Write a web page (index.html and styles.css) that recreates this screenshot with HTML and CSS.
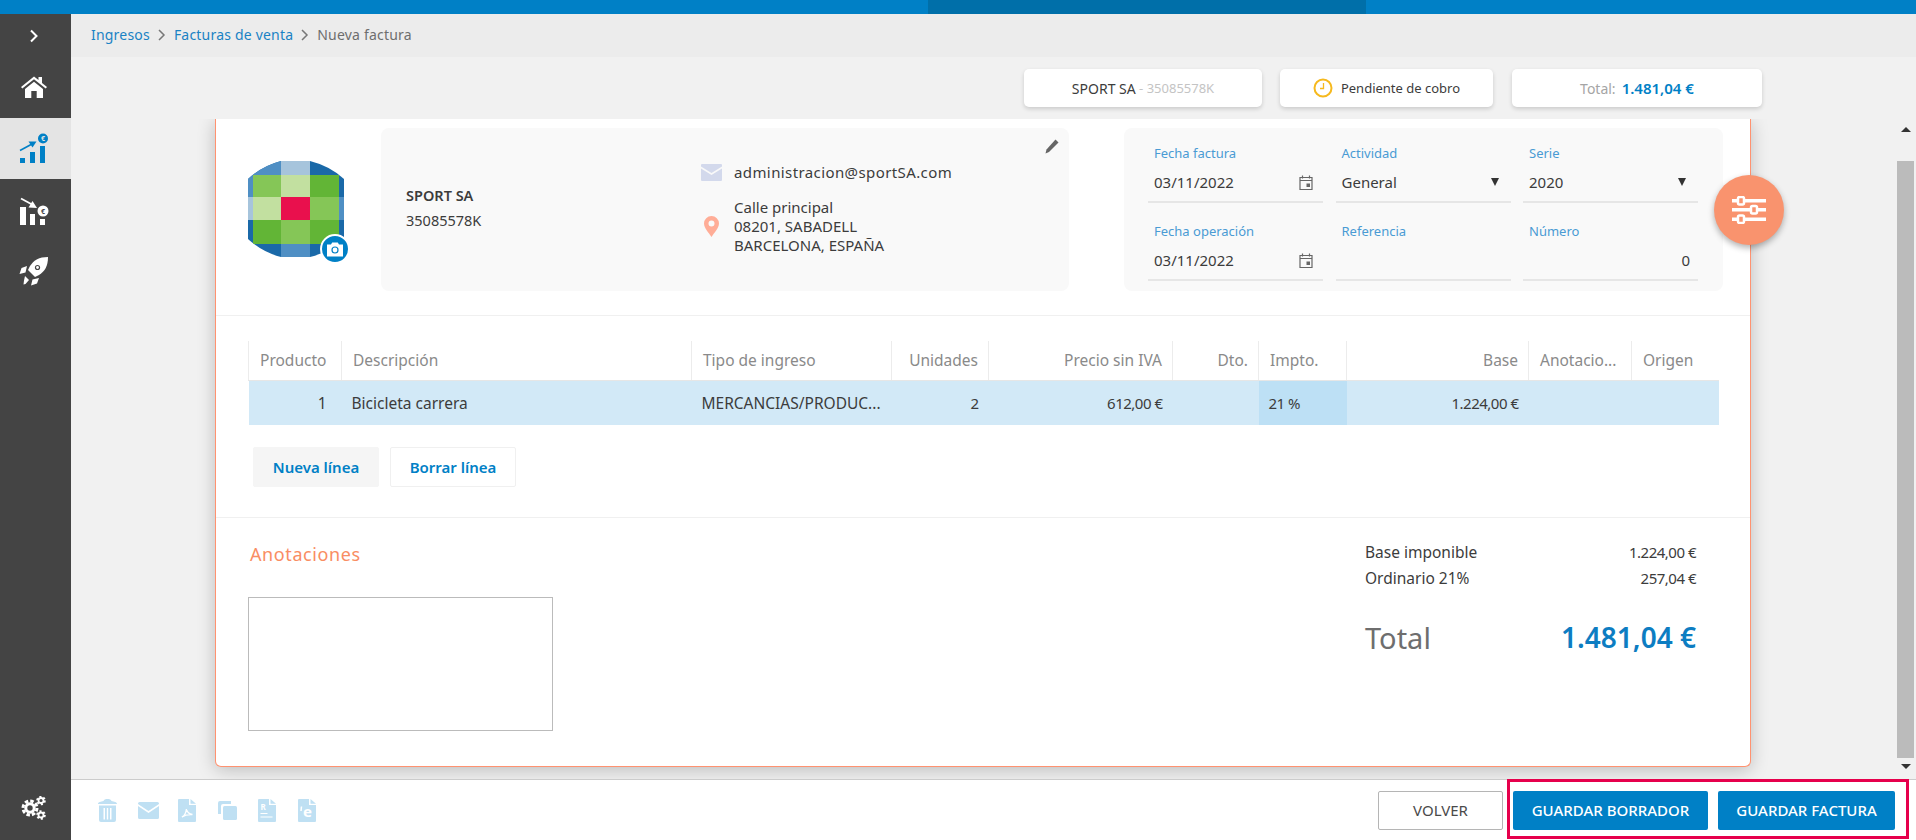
FILE: index.html
```html
<!doctype html>
<html lang="es">
<head>
<meta charset="UTF-8">
<title>Nueva factura</title>
<link rel="stylesheet" href="styles.css">
</head>
<body>
	<!-- barra superior -->
	<div class="topbar"><div class="topbar_dark"></div></div>

	<div class="app">
		<!-- menu lateral -->
		<nav class="sidebar">
			<div class="side_toggle">
				<svg width="10" height="14" viewBox="0 0 10 14"><path d="M2 1.5 7.5 7 2 12.5" fill="none" stroke="#fff" stroke-width="2"/></svg>
			</div>
			<div class="side_item">
				<svg width="28" height="24" viewBox="0 1 28 24"><path d="M1 12 14 1.5l4.5 3.6V2h3.5v5.9L27 12l-1.3 1.6L14 4.3 2.3 13.6z" fill="#fff"/><path d="M5 14 14 6.8 23 14v9h-6.300v-7h-5.400v7H5z" fill="#fff"/></svg>
			</div>
			<div class="side_item side_active">
				<svg width="30" height="32" viewBox="0 0 30 32"><rect x="1" y="25" width="5" height="5" fill="#0080c6"/><rect x="11" y="19" width="5" height="11" fill="#0080c6"/><rect x="21" y="13" width="5" height="17" fill="#0080c6"/><path d="M1 17.500 13 11" stroke="#0080c6" stroke-width="1.600" fill="none"/><path d="M17.500 8.500 9.500 8.500 13.500 14.500z" fill="#0080c6"/><circle cx="24" cy="5.500" r="5" fill="#0080c6"/><text x="24" y="8" class="icon_euro" fill="#e4e4e4">€</text></svg>
			</div>
			<div class="side_item">
				<svg width="30" height="32" viewBox="0 -1 30 32"><rect x="1" y="12" width="6" height="18" fill="#fff"/><rect x="11" y="19" width="5" height="11" fill="#fff"/><rect x="21" y="24" width="5" height="6" fill="#fff"/><path d="M2 3.500 14 10" stroke="#fff" stroke-width="1.800" fill="none"/><path d="M18 13 9.500 12.500 13.500 6z" fill="#fff"/><circle cx="24" cy="16" r="5.500" fill="#fff"/><text x="24" y="19" class="icon_euro" fill="#444">€</text></svg>
			</div>
			<div class="side_item">
				<svg width="30" height="30" viewBox="0 0 30 30"><path d="M29 1c-9 0-14 3-18 9l-2 4 7 7 4-2c6-4 9-9 9-18z" fill="#fff"/><circle cx="18.500" cy="11.500" r="2.600" fill="#444"/><circle cx="18.500" cy="11.500" r="1.400" fill="#fff"/><path d="M8 10 2.500 12 0.500 18l6-1.500zM20 22l-2 5.500-6 2 1.500-6zM6 20l4 4-3.500 4-2 .5.500-4z" fill="#fff"/></svg>
			</div>
			<div class="side_bottom">
				<svg width="26" height="24" viewBox="0 0 26 24"><g fill="none" stroke="#fff"><circle cx="9" cy="12" r="7" stroke-width="3" stroke-dasharray="3.500 2"/><circle cx="9" cy="12" r="4.200" stroke-width="3"/><circle cx="20" cy="4.500" r="3.800" stroke-width="2" stroke-dasharray="2 1.980"/><circle cx="20" cy="4.500" r="2.500" stroke-width="1.800"/><circle cx="20" cy="19" r="3.800" stroke-width="2" stroke-dasharray="2 1.980"/><circle cx="20" cy="19" r="2.500" stroke-width="1.800"/></g></svg>
			</div>
		</nav>

		<main class="content">
			<div class="breadcrumb">
				<a class="crumb_link">Ingresos</a>
				<svg class="crumb_sep" width="8" height="12" viewBox="0 0 8 12"><path d="M1 1l5 5-5 5" fill="none" stroke="#777" stroke-width="1.500"/></svg>
				<a class="crumb_link">Facturas de venta</a>
				<svg class="crumb_sep" width="8" height="12" viewBox="0 0 8 12"><path d="M1 1l5 5-5 5" fill="none" stroke="#777" stroke-width="1.500"/></svg>
				<span class="crumb_now">Nueva factura</span>
			</div>

			<div class="chips">
				<div class="chip chip_client">SPORT SA<span class="chip_id">&nbsp;- 35085578K</span></div>
				<div class="chip chip_state">
					<svg width="20" height="20" viewBox="0 0 20 20"><circle cx="10" cy="10" r="8.500" fill="none" stroke="#f6b91e" stroke-width="2"/><path d="M10.500 5v5.500H7" fill="none" stroke="#f6b91e" stroke-width="1.300"/></svg>
					Pendiente de cobro
				</div>
				<div class="chip chip_total"><span class="chip_grey">Total:</span><b>1.481,04 €</b></div>
			</div>

			<div class="scroller">
				<div class="scroll_area">
					<section class="card">
						<div class="card_head">
							<div class="avatar">
								<svg width="96" height="96" viewBox="0 0 96 96">
									<clipPath id="logo_clip"><path d="M0 18Q14 5 33 0H62Q82 5 96 18V78Q82 91 62 96H33Q14 91 0 78z"/></clipPath>
									<g clip-path="url(#logo_clip)">
										<rect width="96" height="96" fill="#1a69a8"/>
										<rect x="0" width="33" height="14" fill="#4f8fc4"/>
										<rect x="33" width="29" height="14" fill="#a6c4dc"/>
										<rect x="33" y="83" width="29" height="13" fill="#4f8fc4"/>
										<rect x="0" y="36" width="5" height="23" fill="#a6c4dc"/>
										<rect x="91" y="36" width="5" height="23" fill="#4f8fc4"/>
										<rect x="0" y="14" width="5" height="22" fill="#4f8fc4"/>
										<rect x="5" y="14" width="28" height="22" fill="#85c657"/>
										<rect x="33" y="14" width="29" height="22" fill="#c2e0a0"/>
										<rect x="62" y="14" width="29" height="22" fill="#62b536"/>
										<rect x="5" y="36" width="28" height="23" fill="#c2e0a0"/>
										<rect x="33" y="36" width="29" height="23" fill="#e9104d"/>
										<rect x="62" y="36" width="29" height="23" fill="#85c657"/>
										<rect x="5" y="59" width="28" height="24" fill="#62b536"/>
										<rect x="33" y="59" width="29" height="24" fill="#85c657"/>
										<rect x="62" y="59" width="29" height="24" fill="#62b536"/>
									</g>
								</svg>
								<div class="avatar_badge">
									<svg width="18" height="15" viewBox="0 0 18 15"><path d="M1 2.500h4l1.200-2h5.600l1.200 2h4v12H1z" fill="#fff"/><circle cx="9" cy="8" r="3.600" fill="#0080c6"/><circle cx="9" cy="8" r="2.400" fill="#fff"/></svg>
								</div>
							</div>
							<div class="client_box">
								<div class="client_name">
									<b>SPORT SA</b>
									<span>35085578K</span>
								</div>
								<div class="client_contact">
									<div class="contact_row contact_mail">
										<svg class="contact_icon" width="21" height="17" viewBox="0 0 21 17"><path d="M1 0h19a1 1 0 0 1 1 1v1.500L10.500 9 0 2.500V1a1 1 0 0 1 1-1z" fill="#d3d9ec"/><path d="M0 4.500 10.500 11 21 4.500V16a1 1 0 0 1-1 1H1a1 1 0 0 1-1-1z" fill="#d3d9ec"/></svg>
										<span>administracion@sportSA.com</span>
									</div>
									<div class="contact_row">
										<svg class="contact_icon" width="15" height="21" viewBox="0 0 15 21"><path fill-rule="evenodd" d="M7.500 0A7.500 7.500 0 0 1 15 7.500C15 12 10 17 7.500 21 5 17 0 12 0 7.500A7.500 7.500 0 0 1 7.500 0zm0 4.500a3 3 0 1 0 0 6 3 3 0 0 0 0-6z" fill="#ffad97"/></svg>
										<span>Calle principal<br>08201, SABADELL<br>BARCELONA, ESPAÑA</span>
									</div>
								</div>
								<svg class="client_edit" width="14" height="15" viewBox="0 0 14 15"><path d="M10.500 0.500 13.500 3.500 4 13 0.500 14.500 1.500 10.500z" fill="#666"/></svg>
							</div>
							<div class="invoice_box">
								<div class="field">
									<label>Fecha factura</label>
									<div class="field_val">03/11/2022
										<svg width="14" height="15" viewBox="0 0 14 15"><path d="M1 2.500h12v12H1zM1 5.500h12M3.500 .5v3M10.500 .5v3" fill="none" stroke="#666" stroke-width="1.200"/><rect x="7.500" y="8.500" width="3.500" height="3.500" fill="#666"/></svg>
									</div>
								</div>
								<div class="field">
									<label>Actividad</label>
									<div class="field_val">General<i class="caret"></i></div>
								</div>
								<div class="field">
									<label>Serie</label>
									<div class="field_val">2020<i class="caret"></i></div>
								</div>
								<div class="field">
									<label>Fecha operación</label>
									<div class="field_val">03/11/2022
										<svg width="14" height="15" viewBox="0 0 14 15"><path d="M1 2.500h12v12H1zM1 5.500h12M3.500 .5v3M10.500 .5v3" fill="none" stroke="#666" stroke-width="1.200"/><rect x="7.500" y="8.500" width="3.500" height="3.500" fill="#666"/></svg>
									</div>
								</div>
								<div class="field">
									<label>Referencia</label>
									<div class="field_val"></div>
								</div>
								<div class="field">
									<label>Número</label>
									<div class="field_val field_num">0</div>
								</div>
							</div>
						</div>

						<div class="card_lines">
							<table class="lines">
								<colgroup>
									<col class="c1"><col class="c2"><col class="c3"><col class="c4"><col class="c5">
									<col class="c6"><col class="c7"><col class="c8"><col class="c9"><col class="c10">
								</colgroup>
								<tr>
									<th class="num first">Producto</th>
									<th>Descripción</th>
									<th>Tipo de ingreso</th>
									<th class="num">Unidades</th>
									<th class="num">Precio sin IVA</th>
									<th class="num">Dto.</th>
									<th>Impto.</th>
									<th class="num">Base</th>
									<th>Anotacio...</th>
									<th>Origen</th>
								</tr>
								<tr>
									<td class="num first">1</td>
									<td>Bicicleta carrera</td>
									<td>MERCANCIAS/PRODUC...</td>
									<td class="num cell_amount">2</td>
									<td class="num cell_amount">612,00 €</td>
									<td class="num"></td>
									<td class="cell_on cell_amount">21 %</td>
									<td class="num cell_amount">1.224,00 €</td>
									<td></td>
									<td></td>
								</tr>
							</table>
							<div class="line_btns">
								<button class="btn_line btn_grey">Nueva línea</button>
								<button class="btn_line">Borrar línea</button>
							</div>
						</div>

						<div class="card_foot">
							<div class="notes">
								<h3>Anotaciones</h3>
								<div class="notes_box"></div>
							</div>
							<div class="totals">
								<div class="total_row"><span>Base imponible</span><span class="total_val">1.224,00 €</span></div>
								<div class="total_row"><span>Ordinario 21%</span><span class="total_val">257,04 €</span></div>
								<div class="total_big"><span>Total</span><b>1.481,04 €</b></div>
							</div>
						</div>

						<button class="fab">
							<svg width="34" height="28" viewBox="0 0 34 28"><g fill="#fff"><rect y="3" width="34" height="3.500"/><rect y="12" width="34" height="3.500"/><rect y="21.500" width="34" height="3.500"/></g><g fill="#f9936e" stroke="#fff" stroke-width="2.500"><rect x="6" y="1" width="6" height="7.500" rx="1.500"/><rect x="19" y="10" width="6" height="7.500" rx="1.500"/><rect x="6" y="19.500" width="6" height="7.500" rx="1.500"/></g></svg>
						</button>
					</section>
				</div>
				<div class="scrollbar">
					<i class="arrow_up"></i>
					<div class="thumb"></div>
					<i class="arrow_down"></i>
				</div>
			</div>

			<footer class="footer">
				<div class="foot_icons">
					<svg width="19" height="23" viewBox="0 0 19 23"><path fill-rule="evenodd" d="M1 6.500h17v14.500a2 2 0 0 1-2 2H3a2 2 0 0 1-2-2zM5.500 9v11.500H7V9zM8.800 9v11.500h1.400V9zM12 9v11.500h1.500V9z" fill="#bfe0f3"/><path d="M0 5c0-2 3-2.500 5.500-3C6 .5 7.500 0 9.500 0s3.500.5 4 2c2.500.5 5.500 1 5.500 3z" fill="#bfe0f3"/></svg>
					<svg width="21" height="17" viewBox="0 0 21 17"><path d="M1.500 0h18A1.500 1.500 0 0 1 21 1.500V2L10.500 9 0 2v-.5A1.500 1.500 0 0 1 1.500 0z" fill="#bfe0f3"/><path d="M0 4 10.500 11 21 4v11.500a1.500 1.500 0 0 1-1.500 1.500h-18A1.500 1.500 0 0 1 0 15.500z" fill="#bfe0f3"/></svg>
					<svg width="18" height="23" viewBox="0 0 18 23"><path d="M1 0h10v6h7v16a1 1 0 0 1-1 1H1a1 1 0 0 1-1-1V1a1 1 0 0 1 1-1zM12.500 0 18 4.800h-5.500z" fill="#bfe0f3"/><path d="M4 18c3-1.500 4-4.500 4.500-8 .5 3 2.500 5 6 5.500-4-.3-7.500.3-10.500 2.500z" fill="none" stroke="#fff" stroke-width="1.400"/></svg>
					<svg width="19" height="19" viewBox="0 0 19 19"><path d="M2 0h11v3H5a2 2 0 0 0-2 2v8H0V2a2 2 0 0 1 2-2z" fill="#bfe0f3"/><rect x="5" y="5" width="14" height="14" rx="1.500" fill="#bfe0f3"/></svg>
					<svg width="18" height="23" viewBox="0 0 18 23"><path d="M1 0h10v6h7v16a1 1 0 0 1-1 1H1a1 1 0 0 1-1-1V1a1 1 0 0 1 1-1zM12.500 0 18 4.800h-5.500z" fill="#bfe0f3"/><path d="M2.500 14.500h7M2.500 18h12" stroke="#fff" stroke-width="1.200"/><text x="2.500" y="10.500" class="icon_letter">R</text></svg>
					<svg width="18" height="23" viewBox="0 0 18 23"><path d="M1 0h10v6h7v16a1 1 0 0 1-1 1H1a1 1 0 0 1-1-1V1a1 1 0 0 1 1-1zM12.500 0 18 4.800h-5.500z" fill="#bfe0f3"/><path d="M3.500 7.500 3 12" stroke="#fff" stroke-width="1.500"/><text x="5" y="18" class="icon_e">e</text></svg>
				</div>
				<div class="foot_btns">
					<button class="btn btn_back">VOLVER</button>
					<button class="btn btn_main">GUARDAR BORRADOR</button>
					<button class="btn btn_main">GUARDAR FACTURA</button>
				</div>
				<div class="highlight"></div>
			</footer>
		</main>
	</div>
</body>
</html>
```

FILE: styles.css
```css
*{
	box-sizing:border-box;
}
html, body{
	height:100%;
}
body{
	margin:0;
	height:840px;
	overflow:hidden;
	display:flex; flex-direction:column;
	font-family:"Noto Sans", "Liberation Sans", sans-serif;
	font-size:14px;
	color:#3c3c3c;
	background-color:#f1f1f1;
}
button{
	font-family:inherit;
}

/* barra superior */
.topbar{
	height:14px; flex:none;
	background-color:#0080c6;
	padding-left:928px;
}
.topbar_dark{
	width:438px; height:14px;
	background-color:#006fa9;
}
.app{
	flex:1; display:flex; min-height:0;
}

/* menu lateral */
.sidebar{
	width:71px; flex:none;
	background-color:#444444;
	display:flex; flex-direction:column;
}
.side_toggle{
	height:43px;
	display:flex; align-items:center; justify-content:center;
	padding-right:4px;
}
.side_item{
	height:61px;
	display:flex; align-items:center; justify-content:center;
	padding-right:3px;
}
.side_active{
	background-color:#e4e4e4;
}
.side_bottom{
	margin-top:auto; height:61px;
	display:flex; align-items:center; justify-content:center;
	padding-right:3px; padding-bottom:3px;
}
.icon_euro{
	font-size:7px; font-weight:bold; text-anchor:middle;
}
.icon_letter{
	font-size:8px; font-weight:bold; fill:#fff;
}
.icon_e{
	font-size:15px; font-weight:bold; fill:#fff;
}

.content{
	flex:1; min-width:0;
	display:flex; flex-direction:column;
}
.breadcrumb{
	height:43px; flex:none;
	background-color:#ececec;
	display:flex; align-items:center; gap:8px;
	padding-left:20px; padding-bottom:2px;
	font-size:14px;
	letter-spacing:.2px;
}
.crumb_link{
	color:#1a82c4;
}
.crumb_now{
	color:#6e6e6e;
}

/* resumen */
.chips{
	height:62px; flex:none;
	display:flex; gap:18px;
	padding:12px 0 0 953px;
}
.chip{
	height:38px;
	background-color:#ffffff;
	border-radius:5px;
	box-shadow:0 2px 4px rgba(0,0,0,.16);
	display:flex; align-items:center; justify-content:center;
	font-size:13px;
}
.chip_client{
	width:238px; font-size:14px;
}
.chip_id{
	color:#c4c4c4; font-size:13px;
}
.chip_state{
	width:213px; gap:8px;
}
.chip_total{
	width:250px; gap:6px; font-size:14px;
	margin-left:1px;
}
.chip_grey{
	color:#a5a5a5;
}
.chip_total b{
	color:#0080c6; font-weight:600; font-size:15px;
}

/* zona con scroll */
.scroller{
	flex:1; min-height:0;
	display:flex;
}
.scroll_area{
	flex:1; min-width:0;
	padding-left:144px;
	overflow:hidden;
}
.scrollbar{
	width:19px; flex:none;
	display:flex; flex-direction:column; align-items:center;
	padding:0 2px 0 0;
	position:relative;
}
.thumb{
	width:17px; height:597px;
	margin-top:42px;
	background-color:#bbbbbb;
}
.arrow_up, .arrow_down{
	position:absolute; left:4px;
	border-left:5px solid transparent; border-right:5px solid transparent;
}
.arrow_up{
	top:8px; border-bottom:5px solid #333;
}
.arrow_down{
	top:645px; border-top:5px solid #333;
}

/* factura */
.card{
	width:1536px; height:648px;
	background-color:#ffffff;
	border:1px solid #ff9270; border-top:none;
	border-radius:0 0 6px 6px;
	box-shadow:0 3px 18px rgba(0,0,0,.22);
	position:relative;
}
.card_head{
	height:197px;
	border-bottom:1px solid #f0f0f0;
	display:flex; align-items:flex-start;
	padding:9px 0 0 32px;
}
.avatar{
	width:96px; height:96px; flex:none;
	margin-top:33px; margin-right:37px;
	position:relative;
}
.avatar svg{
	display:block;
}
.avatar_badge{
	position:absolute; left:72px; top:73px;
	width:30px; height:30px; border-radius:50%;
	background-color:#0080c6;
	border:2px solid #ffffff;
	display:flex; align-items:center; justify-content:center;
}
.client_box{
	width:688px; height:163px; flex:none;
	background-color:#f9f9f9;
	border-radius:8px;
	display:flex; align-items:center;
	position:relative;
	padding-left:25px;
	line-height:19px;
}
.client_name{
	width:295px; flex:none;
	display:flex; flex-direction:column; gap:6px;
	margin-top:-3px;
	font-size:14.500px;
}
.client_name b{
	font-weight:600;
}
.client_contact{
	display:flex; flex-direction:column; gap:16px;
	margin-top:-1px;
	font-size:15px;
}
.contact_row{
	display:flex; align-items:center;
}
.contact_mail{
	letter-spacing:.4px;
}
.contact_icon{
	width:21px; margin-right:12px; flex:none;
}
.client_edit{
	position:absolute; right:10px; top:11px;
}
.invoice_box{
	width:599px; height:163px; flex:none;
	margin-left:55px;
	background-color:#f9f9f9;
	border-radius:8px;
	display:grid; grid-template-columns:175px 175px 175px; column-gap:12.500px; row-gap:16px;
	padding:13px 0 0 24px;
	align-content:start;
}
.field label{
	display:block; height:24px;
	padding-left:6px;
	font-size:13px; line-height:24px;
	color:#4a9bd4;
}
.field_val{
	height:38px;
	border-bottom:2px solid #e6e6e6;
	display:flex; align-items:center; justify-content:space-between;
	padding:0 10px 2px 6px;
	font-size:15px;
}
.field_num{
	justify-content:flex-end;
	padding-right:8px;
}
.caret{
	width:0; height:0; margin-right:2px;
	border-left:4.500px solid transparent; border-right:4.500px solid transparent;
	border-top:8px solid #333;
}

/* lineas */
.card_lines{
	height:202px;
	border-bottom:1px solid #f0f0f0;
	padding:25px 0 0 32px;
}
.lines{
	width:1470px;
	table-layout:fixed;
	border-collapse:collapse;
}
.c1{width:93px;} .c2{width:350px;} .c3{width:200px;} .c4{width:97px;} .c5{width:184px;}
.c6{width:86px;} .c7{width:88px;} .c8{width:182px;} .c9{width:103px;} .c10{width:87px;}
.lines th{
	height:39px;
	border-left:1px solid #ececec;
	border-bottom:1px solid #e6e6e6;
	font-weight:400; color:#8a8a8a;
	text-align:left;
	padding:0 10px 0 11px;
	white-space:nowrap; overflow:hidden;
	font-size:15.500px;
}
.lines td{
	height:45px;
	background-color:#d2e9f7;
	padding:0 10px 0 10px;
	white-space:nowrap; overflow:hidden;
	font-size:15.500px;
}
.lines td.cell_amount{
	font-size:15px; letter-spacing:-.5px;
}
.lines .num{
	text-align:right;
}
.lines .first{
	padding-right:15px;
}
.lines td.cell_on{
	background-color:#bde0f5;
}
.line_btns{
	display:flex; gap:11px;
	padding:22px 0 0 5px;
}
.btn_line{
	width:126px; height:40px;
	border:1px solid #f0f0f0;
	border-radius:2px;
	background-color:#ffffff;
	color:#0080c6;
	font-size:15px; font-weight:600;
}
.btn_grey{
	background-color:#f5f5f5; border-color:#f5f5f5;
}

/* anotaciones y totales */
.card_foot{
	display:flex; justify-content:space-between;
	padding:22px 54px 0 32px;
}
.notes h3{
	margin:0 0 29px 2px;
	font-size:18px; font-weight:400; line-height:28px;
	color:#f98d63;
	letter-spacing:.6px;
}
.notes_box{
	width:305px; height:134px;
	border:1px solid #bbbbbb;
	background-color:#fff;
}
.totals{
	width:331px;
	margin-top:-1px;
}
.total_row{
	display:flex; justify-content:space-between;
	line-height:26px;
	font-size:15.500px;
}
.total_val{
	font-size:15px; letter-spacing:-.5px;
}
.total_big{
	display:flex; justify-content:space-between; align-items:center;
	margin-top:24px; height:44px;
	font-size:29px; color:#6e6e6e;
}
.total_big b{
	color:#0d7dc2; font-weight:600; font-size:28px;
}
.fab{
	position:absolute; left:1498px; top:56px;
	width:70px; height:70px;
	border:none; border-radius:50%;
	background-color:#f9936e;
	box-shadow:0 3px 6px rgba(0,0,0,.3);
	display:flex; align-items:center; justify-content:center;
	padding:0;
}

/* pie */
.footer{
	height:61px; flex:none;
	background-color:#ffffff;
	border-top:1px solid #cccccc;
	display:flex; align-items:center; justify-content:space-between;
	padding:0 21px 0 27px;
	position:relative;
}
.foot_icons{
	display:grid; grid-template-columns:repeat(6, 40px); align-items:center;
	height:23px;
}
.foot_btns{
	display:flex; gap:10px;
}
.btn{
	height:39px;
	border-radius:2px;
	font-size:15px;
}
.btn_back{
	width:125px;
	background-color:#ffffff;
	border:1px solid #b5b5b5;
	color:#4a4a4a;
}
.btn_main{
	width:195px;
	background-color:#0080c6;
	border:none;
	color:#ffffff;
	font-weight:500;
}
.btn_main:last-child{
	width:177px;
}
.highlight{
	position:absolute; left:1436px; top:-1px;
	width:402px; height:60px;
	border:3px solid #e6004c;
}
```
